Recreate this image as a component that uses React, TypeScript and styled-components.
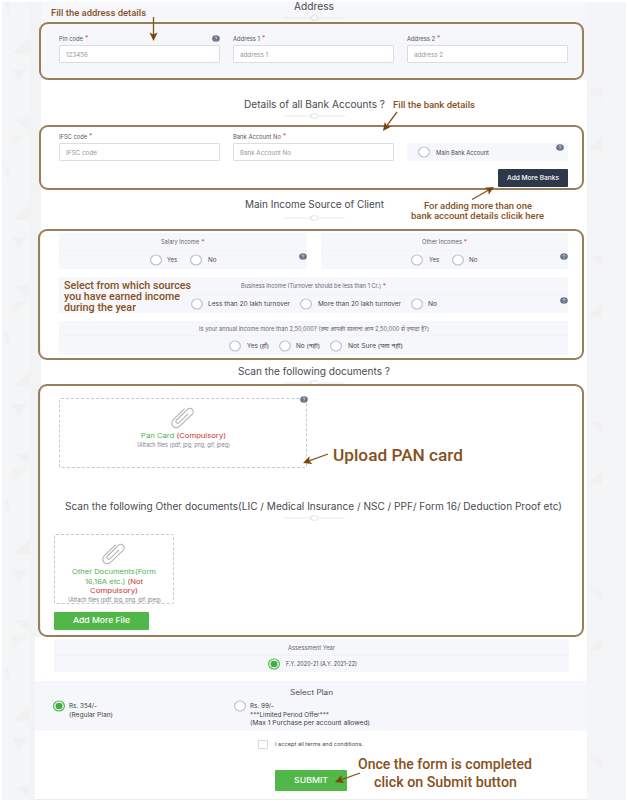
import React, { useLayoutEffect, useRef } from "react";
import styled, { createGlobalStyle } from "styled-components";

const Global = createGlobalStyle`
  body { margin: 0; background: #fff; font-family: Inter, "Noto Sans", "Liberation Sans", sans-serif; color: #4c4c50; }
  * { box-sizing: border-box; }
`;

const BROWN = "#87501c";

const Page = styled.div`
  position: relative;
  width: 628px;
  height: 802px;
  padding: 2px 2px 2px 35px;
  overflow: hidden;
`;
const Backdrop = styled.svg`
  position: absolute;
  left: 2px;
  top: 2px;
`;
const Main = styled.main`
  position: relative;
  width: 552px;
  height: 798px;
  display: flex;
  flex-direction: column;
`;
const Upper = styled.div`
  margin-left: 6px;
  height: 635px;
  background: #fff;
`;
const Lower = styled.div`
  flex: 1;
  background: #fff;
  border-bottom: 1px solid #ececef;
`;
const AddressSection = styled.section`
  background: #f6f7fa;
`;

const FitOuter = styled.span<{ $w: number }>`
  display: inline-block;
  width: ${(p) => p.$w}px;
  white-space: nowrap;
  flex: none;
  text-align: left;
  vertical-align: top;
`;
const FitInner = styled.span`
  display: inline-block;
  transform-origin: 0 50%;
`;

/* Stretches a line of text horizontally to a given width. */
function Wide({ w, children }: { w: number; children: React.ReactNode }) {
  const ref = useRef<HTMLSpanElement>(null);
  useLayoutEffect(() => {
    const el = ref.current;
    if (!el) return;
    el.style.transform = "none";
    const natural = el.getBoundingClientRect().width;
    el.style.transform = `scaleX(${w / natural})`;
  }, [w]);
  return (
    <FitOuter $w={w}>
      <FitInner ref={ref}>{children}</FitInner>
    </FitOuter>
  );
}

const HeadingWrap = styled.div<{ $h: number; $t: number; $shift?: number }>`
  height: ${(p) => p.$h}px;
  padding-top: ${(p) => p.$t - 4}px;
  display: flex;
  flex-direction: column;
  align-items: center;
  margin-left: ${(p) => p.$shift ?? 0}px;
`;
const HeadingText = styled.h2`
  margin: 0;
  font-size: 9.9px;
  font-weight: 400;
  line-height: 8px;
  height: 8px;
  color: #4a4a4f;
`;
const Ornament = styled.svg<{ $gap: number }>`
  margin-top: ${(p) => p.$gap}px;
  flex: none;
`;
function Heading(p: { h: number; t: number; d: number; w: number; shift?: number; text: string }) {
  return (
    <HeadingWrap $h={p.h} $t={p.t} $shift={p.shift}>
      <HeadingText>
        <Wide w={p.w}>{p.text}</Wide>
      </HeadingText>
      <Ornament $gap={p.d - p.t - 7} width="62" height="6" viewBox="0 0 62 6" fill="none" stroke="#dcdde2" strokeWidth="0.8">
        <path d="M0 3H26M36 3H62" stroke="#e6e6ea" />
        <ellipse cx="31.5" cy="3" rx="4" ry="2.4" />
        <path d="M29 1.5C26 2 26 4 29 4.6" />
      </Ornament>
    </HeadingWrap>
  );
}

const Outline = styled.div<{ $h: number; $top: number; $left?: number }>`
  position: relative;
  width: ${(p) => (p.$left === 3 ? 546 : 545)}px;
  height: ${(p) => p.$h}px;
  margin-left: -${(p) => p.$left ?? 2}px;
  padding: ${(p) => p.$top}px 0 0 ${(p) => (p.$left === 3 ? 19 : 18)}px;
  border: 2px solid #9c7d59;
  border-radius: 9px;
`;
const Fields = styled.div`
  display: grid;
  grid-template-columns: repeat(3, 161px);
  column-gap: 13px;
`;
const Label = styled.div`
  display: flex;
  height: 8px;
  margin-bottom: 2px;
  font-size: 5.7px;
  line-height: 8px;
  color: #55555c;
`;
const LabelEnd = styled.span`
  margin-left: auto;
  line-height: 0;
`;
const Star = styled.span`
  color: #e2504c;
  font-size: 6.5px;
  line-height: 7px;
  margin-left: 2px;
`;
const Input = styled.div`
  height: 18px;
  border: 1px solid #dcdde2;
  border-radius: 1px;
  background: #fff;
  padding-left: 6px;
  font-size: 5.8px;
  line-height: 17px;
  color: #97979d;
`;
const MainAccount = styled.div`
  position: relative;
  height: 18px;
  margin-top: 10px;
  background: #f6f7fa;
  display: flex;
  align-items: center;
  padding-left: 11px;
  gap: 6px;
  font-size: 5.8px;
`;
const Badge = styled.span<{ $r: number; $t: number }>`
  position: absolute;
  right: ${(p) => p.$r}px;
  top: ${(p) => p.$t}px;
  line-height: 0;
`;
const Help = () => (
  <svg width="8" height="7" viewBox="0 0 8 7">
    <ellipse cx="4" cy="3.5" rx="3.8" ry="3.3" fill="#68748c" />
    <path d="M2.8 2.7C3 1.5 5.2 1.7 5 2.8C4.8 3.4 4 3.3 4 4.1M4 4.8V5.5" stroke="#dfe3ec" strokeWidth="0.8" fill="none" />
  </svg>
);

const Circle = ({ on }: { on?: boolean }) => (
  <svg width="12" height="12" viewBox="0 0 12 12">
    <ellipse cx="6" cy="6" rx="5.4" ry="5" fill="#fff" stroke={on ? "#4fb44b" : "#bdc2d0"} strokeWidth="1.2" />
    {on && <ellipse cx="6" cy="6" rx="3.5" ry="3.2" fill="#3fb13b" />}
  </svg>
);

const Button = styled.button<{ $w: number; $h: number; $dark?: boolean; $size: number }>`
  display: flex;
  align-items: center;
  justify-content: center;
  width: ${(p) => p.$w}px;
  height: ${(p) => p.$h}px;
  padding: 0;
  border: 0;
  border-radius: 1px;
  background: ${(p) => (p.$dark ? "#2d394b" : "#51b748")};
  color: #fff;
  font-family: inherit;
  font-weight: 500;
  font-size: ${(p) => p.$size}px;
  line-height: 10px;
`;
const BankAction = styled.div`
  display: flex;
  justify-content: flex-end;
  width: 509px;
  margin-top: 8px;
`;

const Panels = styled.div`
  display: grid;
  grid-template-columns: 248px 247px;
  gap: 8px 14px;
`;
const Panel = styled.div<{ $full?: boolean; $h?: number; $head?: number }>`
  position: relative;
  grid-column: ${(p) => (p.$full ? "1 / -1" : "auto")};
  height: ${(p) => p.$h ?? 36}px;
  background: #f6f7fa;
  display: grid;
  grid-template-rows: ${(p) => p.$head ?? 18}px 1fr;
`;
const PanelHead = styled.div`
  display: flex;
  justify-content: center;
  align-items: center;
  padding-top: 1px;
  border-bottom: 1px solid #f2f3f6;
  font-size: 5.7px;
  line-height: 8px;
  color: #66666d;
`;
const Options = styled.div<{ $gap?: number; $shift?: number }>`
  display: flex;
  justify-content: center;
  align-items: center;
  gap: ${(p) => p.$gap ?? 12}px;
  padding-left: ${(p) => p.$shift ?? 0}px;
`;
const Option = styled.label`
  display: flex;
  align-items: center;
  gap: 5.5px;
  font-size: 5.9px;
  line-height: 10px;
  color: #48484d;
`;
function Radio({ text, w, on }: { text: string; w: number; on?: boolean }) {
  return (
    <Option>
      <Circle on={on} />
      <Wide w={w}>{text}</Wide>
    </Option>
  );
}

const DropZone = styled.div<{ $w: number; $shift?: number }>`
  position: relative;
  width: ${(p) => p.$w}px;
  height: 70px;
  margin-left: ${(p) => p.$shift ?? 0}px;
  padding-top: 7px;
  border: 1px dashed #c8c8cc;
  border-radius: 2px;
  display: flex;
  flex-direction: column;
  align-items: center;
`;
const DropTitle = styled.div`
  margin-top: 2px;
  font-size: 6.8px;
  line-height: 9.7px;
  color: #4fb052;
  display: flex;
  flex-direction: column;
  align-items: center;
`;
const Required = styled.span`
  color: #c9302f;
`;
const DropNote = styled.div`
  font-size: 5.5px;
  line-height: 8px;
  color: #85858b;
`;
const ClipIcon = styled.svg`
  flex: none;
`;
const Clip = () => (
  <ClipIcon width="24" height="23" viewBox="-12 -11.5 24 23" fill="none" stroke="#b4b4b8" strokeWidth="1.1" strokeLinecap="round">
    <path
      transform="rotate(-44) scale(1.07 1)"
      d="M5.500 .9H-6A1.800 1.800 0 0 1 -6 -2.700H8.200A3.350 3.350 0 0 1 8.200 4H-7.800A4.600 4.600 0 0 1 -7.800 -5.200H6.500"
    />
  </ClipIcon>
);
const FileAction = styled.div`
  margin: 8px 0 0 -5px;
`;

const YearPanel = styled.div`
  padding: 2px 18px 0 19px;
`;
const Plans = styled.section`
  height: 50px;
  margin-top: 9px;
  padding-top: 7px;
  background: #f6f7fa;
`;
const PlanTitle = styled.div`
  display: flex;
  justify-content: center;
  font-size: 7.2px;
  line-height: 9px;
`;
const PlanGrid = styled.div`
  display: grid;
  grid-template-columns: 181px 1fr;
  padding: 3px 0 0 18px;
`;
const Plan = styled.div`
  display: grid;
  grid-template-columns: 12px 1fr;
  column-gap: 4px;
  font-size: 6.2px;
  line-height: 8.6px;
  color: #3d3d42;
`;
const PlanLines = styled.div`
  display: flex;
  flex-direction: column;
  padding-top: 2px;
`;
const Terms = styled.div`
  display: flex;
  align-items: center;
  gap: 7px;
  height: 10px;
  margin: 8px 0 21px 223px;
  font-size: 5.4px;
  line-height: 9px;
`;
const Check = styled.span`
  width: 10px;
  height: 9px;
  border: 1px solid #d9dadf;
  background: #fff;
`;
const SubmitRow = styled.div`
  padding-left: 240px;
`;

const Note = styled.div<{ $x: number; $y: number; $s: number; $lh: number; $center?: boolean }>`
  position: absolute;
  left: ${(p) => p.$x}px;
  top: ${(p) => p.$y}px;
  font-family: Roboto, sans-serif;
  font-weight: 500;
  font-size: ${(p) => p.$s}px;
  line-height: ${(p) => p.$lh}px;
  color: ${BROWN};
  display: flex;
  flex-direction: column;
  align-items: ${(p) => (p.$center ? "center" : "flex-start")};
`;
const Arrows = styled.svg`
  position: absolute;
  left: 0;
  top: 0;
  pointer-events: none;
`;

function Arrow({ x1, y1, x2, y2 }: { x1: number; y1: number; x2: number; y2: number }) {
  const angle = (Math.atan2(y2 - y1, x2 - x1) * 180) / Math.PI;
  const len = Math.hypot(x2 - x1, y2 - y1);
  return (
    <g transform={`translate(${x1} ${y1}) rotate(${angle})`}>
      <path d={`M0 0H${len - 5}`} stroke={BROWN} strokeWidth="1.3" />
      <path d={`M${len} 0L${len - 8.5} -4L${len - 6.5} 0L${len - 8.5} 4Z`} fill="#7d430e" />
    </g>
  );
}

const tiles = [-167, 0, 167, 334, 501, 668];

export default function App() {
  return (
    <>
      <Global />
      <Page>
        <Backdrop width="624" height="798" viewBox="2 2 624 798">
          <rect x="2" y="2" width="624" height="798" fill="#f4f5f7" />
          <rect x="30" y="2" width="11" height="798" fill="#f2f3f5" />
          {tiles.map((y) => (
            <g key={y} transform={`translate(0 ${y})`}>
              <path d="M12 53L30 38V53Z" fill="#f0f1f0" />
              <path d="M12 70H26L19 82Z" fill="#edf2f6" />
              <path d="M14 120L29 130V118Z" fill="#eef2f4" />
              <path d="M12 135H27L12 147Z" fill="#f3f3ed" />
              <path d="M4 168L9 166V182Z" fill="#eff1f7" />
              <path d="M588 88H602V101Z" fill="#f2f1f3" />
              <path d="M588 149L602 137V150Z" fill="#f3f1f0" />
            </g>
          ))}
        </Backdrop>
        <Main>
          <Upper>
            <AddressSection>
              <Heading h={20} t={4} d={16} w={40} text="Address" />
              <Outline $h={58} $top={11}>
                <Fields>
                  <div>
                    <Label>
                      <Wide w={24}>Pin code</Wide>
                      <Star>*</Star>
                      <LabelEnd><Help /></LabelEnd>
                    </Label>
                    <Input><Wide w={22}>123456</Wide></Input>
                  </div>
                  <div>
                    <Label><Wide w={27}>Address 1</Wide><Star>*</Star></Label>
                    <Input><Wide w={28}>address 1</Wide></Input>
                  </div>
                  <div>
                    <Label><Wide w={28}>Address 2</Wide><Star>*</Star></Label>
                    <Input><Wide w={29}>address 2</Wide></Input>
                  </div>
                </Fields>
              </Outline>
            </AddressSection>
            <Heading h={45} t={24} d={36} w={141} text="Details of all Bank Accounts ?" />
            <Outline $h={65} $top={6}>
              <Fields>
                <div>
                  <Label><Wide w={28}>IFSC code</Wide><Star>*</Star></Label>
                  <Input><Wide w={31}>IFSC code</Wide></Input>
                </div>
                <div>
                  <Label><Wide w={48}>Bank Account No</Wide><Star>*</Star></Label>
                  <Input><Wide w={51}>Bank Account No</Wide></Input>
                </div>
                <MainAccount>
                  <Circle />
                  <Wide w={53}>Main Bank Account</Wide>
                  <Badge $r={4} $t={1}><Help /></Badge>
                </MainAccount>
              </Fields>
              <BankAction>
                <Button $w={70} $h={18} $dark $size={6.2}><Wide w={52}>Add More Banks</Wide></Button>
              </BankAction>
            </Outline>
            <Heading h={39} t={14} d={28} w={139} text="Main Income Source of Client" />
            <Outline $h={131} $top={2} $left={3}>
              <Panels>
                <Panel>
                  <PanelHead><Wide w={38}>Salary Income</Wide><Star>*</Star></PanelHead>
                  <Options $gap={13}><Radio text="Yes" w={10} /><Radio text="No" w={8.5} /></Options>
                  <Badge $r={0} $t={20}><Help /></Badge>
                </Panel>
                <Panel>
                  <PanelHead><Wide w={40}>Other Incomes</Wide><Star>*</Star></PanelHead>
                  <Options $gap={13}><Radio text="Yes" w={10} /><Radio text="No" w={8.5} /></Options>
                  <Badge $r={0} $t={20}><Help /></Badge>
                </Panel>
                <Panel $full>
                  <PanelHead><Wide w={140}>Business Income (Turnover should be less than 1 Cr.)</Wide><Star>*</Star></PanelHead>
                  <Options $gap={10} $shift={1}>
                    <Radio text="Less than 20 lakh turnover" w={82} />
                    <Radio text="More than 20 lakh turnover" w={83} />
                    <Radio text="No" w={9} />
                  </Options>
                  <Badge $r={0} $t={20}><Help /></Badge>
                </Panel>
                <Panel $full $h={34} $head={15}>
                  <PanelHead><Wide w={230}>Is your annual income more than 2,50,000? (क्या आपकी सालाना आय 2,50,000 से ज़्यादा है?)</Wide></PanelHead>
                  <Options $gap={10} $shift={5}>
                    <Radio text="Yes (हाँ)" w={22} />
                    <Radio text="No (नहीं)" w={24} />
                    <Radio text="Not Sure (पता नहीं)" w={55} />
                  </Options>
                </Panel>
              </Panels>
            </Outline>
            <Heading h={24} t={11} d={23} w={152} text="Scan the following documents ?" />
            <Outline $h={253} $top={12} $left={3}>
              <DropZone $w={248}>
                <Clip />
                <DropTitle>
                  <Wide w={85}>Pan Card <Required>(Compulsory)</Required></Wide>
                </DropTitle>
                <DropNote><Wide w={93}>(Attach files (pdf, jpg, png, gif, jpeg)</Wide></DropNote>
                <Badge $r={-2} $t={-3}><Help /></Badge>
              </DropZone>
              <Heading h={66} t={38} d={50} w={497} shift={-14} text="Scan the following Other documents(LIC / Medical Insurance / NSC / PPF/ Form 16/ Deduction Proof etc)" />
              <DropZone $w={120} $shift={-5}>
                <Clip />
                <DropTitle>
                  <Wide w={84}>Other Documents(Form</Wide>
                  <Wide w={58}>16,16A etc.) <Required>(Not</Required></Wide>
                  <Required><Wide w={48}>Compulsory)</Wide></Required>
                </DropTitle>
                <DropNote><Wide w={93}>(Attach files (pdf, jpg, png, gif, jpeg)</Wide></DropNote>
              </DropZone>
              <FileAction>
                <Button $w={95} $h={18} $size={7.5}><Wide w={57}>Add More File</Wide></Button>
              </FileAction>
            </Outline>
          </Upper>
          <Lower>
            <YearPanel>
              <Panel $h={33} $head={17}>
                <PanelHead><Wide w={47}>Assessment Year</Wide></PanelHead>
                <Options $shift={2}><Radio text="F.Y. 2020-21 (A.Y. 2021-22)" w={71} on /></Options>
              </Panel>
            </YearPanel>
            <Plans>
              <PlanTitle><Wide w={43}>Select Plan</Wide></PlanTitle>
              <PlanGrid>
                <Plan>
                  <Circle on />
                  <PlanLines><Wide w={28}>Rs. 354/-</Wide><Wide w={44}>(Regular Plan)</Wide></PlanLines>
                </Plan>
                <Plan>
                  <Circle />
                  <PlanLines>
                    <Wide w={24}>Rs. 99/-</Wide>
                    <Wide w={79}>***Limited Period Offer***</Wide>
                    <Wide w={120}>(Max 1 Purchase per account allowed)</Wide>
                  </PlanLines>
                </Plan>
              </PlanGrid>
            </Plans>
            <Terms><Check /><Wide w={88}>I accept all terms and conditions.</Wide></Terms>
            <SubmitRow>
              <Button $w={72} $h={21} $size={7.2}><Wide w={34}>SUBMIT</Wide></Button>
            </SubmitRow>
          </Lower>
        </Main>
        <Note $x={51} $y={7} $s={9.5} $lh={11}><Wide w={95}>Fill the address details</Wide></Note>
        <Note $x={393} $y={99} $s={9.5} $lh={11}><Wide w={82}>Fill the bank details</Wide></Note>
        <Note $x={411} $y={201} $s={9.3} $lh={9.5} $center>
          <Wide w={108}>For adding more than one</Wide>
          <Wide w={133}>bank account details clicik here</Wide>
        </Note>
        <Note $x={64} $y={281} $s={10.8} $lh={10.8}>
          <Wide w={127}>Select from which sources</Wide>
          <Wide w={116}>you have earned income</Wide>
          <Wide w={72}>during the year</Wide>
        </Note>
        <Note $x={333} $y={445} $s={17} $lh={20}><Wide w={130}>Upload PAN card</Wide></Note>
        <Note $x={358} $y={756} $s={14} $lh={17.5} $center>
          <Wide w={174}>Once the form is completed</Wide>
          <Wide w={143}>click on Submit button</Wide>
        </Note>
        <Arrows width="628" height="802">
          <Arrow x1={153.5} y1={17} x2={153.5} y2={41} />
          <Arrow x1={397} y1={112} x2={383} y2={131} />
          <Arrow x1={472} y1={199.5} x2={494} y2={187} />
          <Arrow x1={328} y1={454} x2={303} y2={463} />
          <Arrow x1={360} y1={773} x2={335} y2={782} />
        </Arrows>
      </Page>
    </>
  );
}
